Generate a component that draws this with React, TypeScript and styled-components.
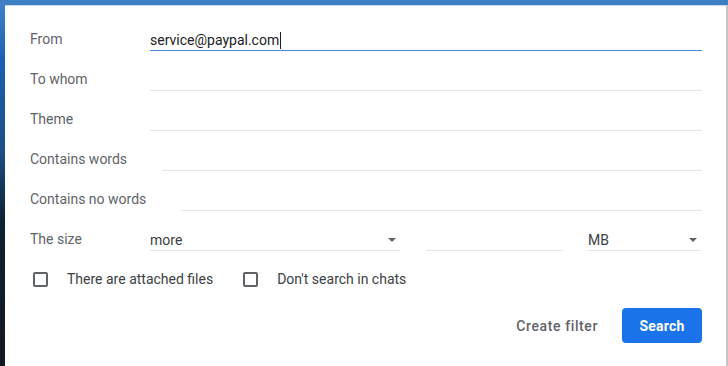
import React from 'react';
import styled, { createGlobalStyle } from 'styled-components';

const GlobalStyle = createGlobalStyle`
  html, body {
    margin: 0;
    height: 100%;
  }
  body {
    font-family: Roboto, 'Liberation Sans', Arial, sans-serif;
    background: linear-gradient(180deg, #3d80c6 0px, #3d80c6 6px, #1b5fb4 60px, #1d4f86 150px, #0e2233 220px, #141820 366px);
  }
  #root {
    height: 100%;
  }
`;

export default function App() {
  return (
    <>
      <GlobalStyle />
      <Backdrop>
        <Dialog>
          <Field label="From" value="service@paypal.com" focused />
          <Field label="To whom" />
          <Field label="Theme" />
          <Field label="Contains words" />
          <Field label="Contains no words" />

          <Row>
            <Label>The size</Label>
            <Select width={250}>
              <span>more</span>
              <Arrow />
            </Select>
            <Input width={137} />
            <Select width={113}>
              <span>MB</span>
              <Arrow />
            </Select>
          </Row>

          <CheckRow>
            <Check>
              <Box />
              There are attached files
            </Check>
            <Check>
              <Box />
              Don't search in chats
            </Check>
          </CheckRow>

          <Actions>
            <TextButton>Create filter</TextButton>
            <PrimaryButton>Search</PrimaryButton>
          </Actions>
        </Dialog>
      </Backdrop>
    </>
  );
}

function Field({
  label,
  value,
  focused,
}: {
  label: string;
  value?: string;
  focused?: boolean;
}) {
  return (
    <Row>
      <Label>{label}</Label>
      <Input focused={focused}>
        {value}
        {focused && <Caret />}
      </Input>
    </Row>
  );
}

const Backdrop = styled.div`
  height: 100%;
  box-sizing: border-box;
  padding: 5px 0 0 5px;
  display: flex;
`;

const Dialog = styled.div`
  flex: 1;
  min-width: 0;
  background: #fff;
  border-top: 1px solid #c9d4e0;
  border-right: 2px solid #c4c4c4;
  padding: 13px 24px 0 25px;
  display: flex;
  flex-direction: column;
`;

const Row = styled.div`
  display: flex;
  align-items: center;
  height: 40px;
`;

const Label = styled.div`
  min-width: 85px;
  padding-right: 35px;
  font-size: 14px;
  color: #5f6368;
  white-space: nowrap;
`;

const Input = styled.div<{ focused?: boolean; width?: number }>`
  flex: ${(p) => (p.width ? `0 0 ${p.width}px` : '1')};
  height: 20px;
  line-height: 20px;
  font-size: 14px;
  color: #202124;
  border-bottom: 1px solid ${(p) => (p.focused ? '#4a86d8' : '#e6e6e6')};
  display: flex;
  align-items: center;
  margin-top: 3px;
`;

const Caret = styled.span`
  display: inline-block;
  width: 1px;
  height: 17px;
  background: #202124;
  margin-left: 1px;
`;

const Select = styled.div<{ width: number }>`
  flex: 0 0 ${(p) => p.width}px;
  box-sizing: border-box;
  height: 21px;
  line-height: 20px;
  font-size: 14px;
  color: #3c4043;
  border-bottom: 1px solid #e6e6e6;
  display: flex;
  align-items: center;
  justify-content: space-between;
  padding-right: 4px;
  margin-top: 3px;
  margin-right: 26px;
  &:last-child {
    margin-right: 0;
  }
  & + ${Input} {
    margin-right: 25px;
  }
`;

const Arrow = styled.span`
  width: 0;
  height: 0;
  border-left: 4px solid transparent;
  border-right: 4px solid transparent;
  border-top: 4px solid #5f6368;
`;

const CheckRow = styled.div`
  display: flex;
  align-items: center;
  height: 40px;
  gap: 30px;
  padding-left: 3px;
`;

const Check = styled.label`
  display: flex;
  align-items: center;
  gap: 19px;
  font-size: 14px;
  color: #3c4043;
`;

const Box = styled.span`
  width: 11px;
  height: 11px;
  border: 2px solid #5f6368;
  border-radius: 2px;
`;

const Actions = styled.div`
  display: flex;
  justify-content: flex-end;
  align-items: center;
  gap: 24px;
  margin-top: 9px;
`;

const TextButton = styled.button`
  background: none;
  border: none;
  padding: 0;
  font-family: inherit;
  font-size: 14px;
  font-weight: 500;
  color: #5f6368;
  letter-spacing: 0.6px;
`;

const PrimaryButton = styled.button`
  width: 80px;
  height: 35px;
  border: none;
  border-radius: 4px;
  background: #1a73e8;
  color: #fff;
  font-family: inherit;
  font-size: 14px;
  font-weight: 700;
  letter-spacing: 0.2px;
`;
